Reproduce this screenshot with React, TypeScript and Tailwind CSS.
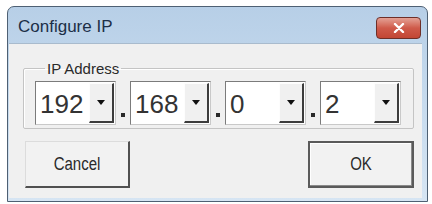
import React from "react";

const octets = ["192", "168", "0", "2"];

function Combo({ value }: { value: string }) {
  return (
    <div className="w-[81px] h-[44px] flex border border-t-[#7b7b7b] border-l-[#7b7b7b] border-r-[#c9c9c9] border-b-[#c9c9c9] bg-white">
      <div className="flex-1 flex items-center pl-[4px] text-[26px] leading-none text-[#333333] pt-[2px]">
        {value}
      </div>
      <div className="w-[25px] my-[1px] mr-[1px] flex items-center justify-center bg-[#f0f0f0] border-l border-t border-l-[#fdfdfd] border-t-[#fdfdfd] border-r-2 border-b-2 border-r-[#3c3c3c] border-b-[#3c3c3c]">
        <svg width="8" height="5" viewBox="0 0 8 5">
          <path d="M0 0h8L4 5z" fill="#111" />
        </svg>
      </div>
    </div>
  );
}

export default function App() {
  return (
    <div
      className="w-[432px] h-[204px] bg-white pt-[6px] pl-[7px]"
      style={{ fontFamily: '"Liberation Sans", Arial, sans-serif' }}
    >
      <div className="w-[421px] h-[196px] rounded-t-[7px] border border-[#4e6073] bg-gradient-to-b from-[#b7cfe7] via-[#c7dbee] to-[#d6e5f3] flex flex-col pl-[1px] pr-[5px] pb-[3px]">
        {/* Title bar */}
        <div className="h-[36px] flex items-start justify-between shrink-0">
          <span className="mt-[11px] ml-[9px] text-[17px] leading-none text-[#1c2f47]">
            Configure IP
          </span>
          <div className="mt-[10px] mr-[1px] w-[45px] h-[22px] rounded-[4px] border border-[#6e2f28] bg-gradient-to-b from-[#e3a195] via-[#cf5a4a] to-[#c24634] flex items-center justify-center">
            <svg width="12" height="10" viewBox="0 0 12 10">
              <path d="M2 1l8 8M10 1L2 9" stroke="#fff" strokeWidth="2.4" strokeLinecap="round" />
            </svg>
          </div>
        </div>

        {/* Client area */}
        <div className="flex-1 bg-[#f0f0f0] border-t border-[#a9bbcd] flex flex-col pl-[14px] pr-[8px]">
          <fieldset className="mt-[17px] h-[68px] border border-[#c4c4c4] rounded-[2px] px-[11px] shadow-[inset_1px_1px_0_#ffffff]">
            <legend className="ml-[10px] px-[2px] text-[15px] leading-[15px] text-[#2a2a2a]">
              IP Address
            </legend>
            <div className="flex items-stretch mt-[5px]">
              {octets.map((o, i) => (
                <React.Fragment key={i}>
                  {i > 0 && (
                    <div className="w-[14px] flex items-end justify-center pb-[8px]">
                      <div className="w-[4px] h-[4px] bg-[#2a2a2a]" />
                    </div>
                  )}
                  <Combo value={o} />
                </React.Fragment>
              ))}
            </div>
          </fieldset>

          <div className="flex justify-between mt-[12px] pl-[2px]">
            <button className="w-[105px] h-[47px] bg-[#f2f2f2] border border-t-[#dcdcdc] border-l-[#dcdcdc] border-r-2 border-b-2 border-r-[#505050] border-b-[#505050] text-[15px] text-[#2a2a2a] flex items-center justify-center">
              <span className="inline-block scale-y-[1.2]">Cancel</span>
            </button>
            <button className="w-[106px] h-[47px] bg-[#f2f2f2] border-2 border-[#5a5a5a] shadow-[inset_-1px_-1px_0_#8a8a8a,inset_1px_1px_0_#ffffff] text-[15px] text-[#2a2a2a] flex items-center justify-center">
              <span className="inline-block scale-y-[1.2]">OK</span>
            </button>
          </div>
        </div>
      </div>
    </div>
  );
}
